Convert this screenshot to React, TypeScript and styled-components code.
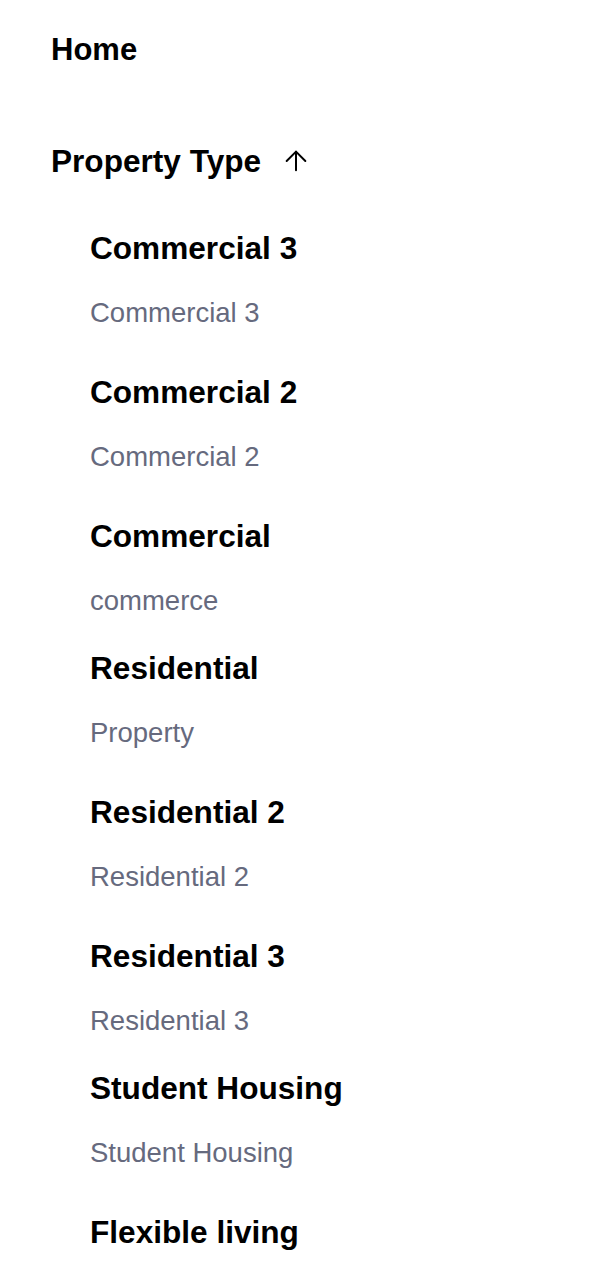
import React from "react";
import styled, { createGlobalStyle } from "styled-components";
import { ArrowUp } from "lucide-react";

const GlobalStyle = createGlobalStyle`
  html, body {
    margin: 0;
    padding: 0;
    background: #ffffff;
  }
  body {
    font-family: "Liberation Sans", Arial, Helvetica, sans-serif;
    color: #000000;
  }
`;

const Nav = styled.nav`
  display: flex;
  flex-direction: column;
  padding: 32px 0 0 51px;
`;

const TopLink = styled.a`
  font-size: 31px;
  line-height: 36px;
  font-weight: 700;
  color: #000;
  text-decoration: none;
  align-self: flex-start;
`;

const SectionHeader = styled.button`
  margin-top: 75px;
  display: flex;
  align-items: center;
  gap: 19px;
  padding: 0;
  border: 0;
  background: none;
  font-family: inherit;
  font-size: 31.6px;
  line-height: 36px;
  font-weight: 700;
  color: #000;
  cursor: pointer;
  align-self: flex-start;
`;

const List = styled.ul`
  list-style: none;
  margin: 51px 0 0;
  padding: 0 0 0 39px;
  display: flex;
  flex-direction: column;
`;

const Item = styled.li<{ $tight?: boolean }>`
  display: flex;
  flex-direction: column;
  padding-bottom: ${(p) => (p.$tight ? 31 : 43)}px;
`;

const ItemTitle = styled.span`
  font-size: 31.6px;
  line-height: 36px;
  font-weight: 700;
  color: #000;
`;

const ItemSub = styled.span`
  margin-top: 29px;
  font-size: 27.5px;
  line-height: 36px;
  font-weight: 400;
  color: #666a7e;
`;

const items: { title: string; sub?: string; tight?: boolean }[] = [
  { title: "Commercial 3", sub: "Commercial 3" },
  { title: "Commercial 2", sub: "Commercial 2" },
  { title: "Commercial", sub: "commerce", tight: true },
  { title: "Residential", sub: "Property" },
  { title: "Residential 2", sub: "Residential 2" },
  { title: "Residential 3", sub: "Residential 3", tight: true },
  { title: "Student Housing", sub: "Student Housing" },
  { title: "Flexible living" },
];

export default function App() {
  return (
    <>
      <GlobalStyle />
      <Nav>
        <TopLink href="#">Home</TopLink>
        <SectionHeader type="button">
          Property Type
          <ArrowUp size={32} strokeWidth={1.5} color="#000" />
        </SectionHeader>
        <List>
          {items.map((it) => (
            <Item key={it.title} $tight={it.tight}>
              <ItemTitle>{it.title}</ItemTitle>
              {it.sub && <ItemSub>{it.sub}</ItemSub>}
            </Item>
          ))}
        </List>
      </Nav>
    </>
  );
}
